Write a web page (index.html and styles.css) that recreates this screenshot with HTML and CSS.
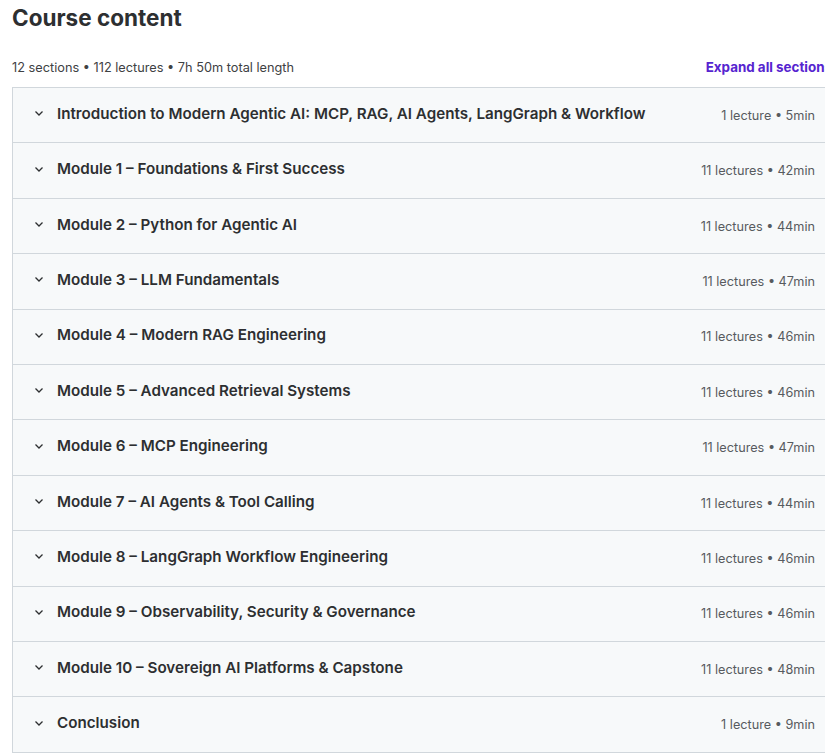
FILE: index.html
```html
<!DOCTYPE html>
<html lang="en">
<head>
    <meta charset="UTF-8">
    <title>Course content</title>
    <link rel="stylesheet" href="styles.css">
</head>
<body>
    <div class="container">
        <h2 class="heading">Course content</h2>

        <div class="summary">
            <span>12 sections • 112 lectures • 7h 50m total length</span>
            <button class="expand">Expand all sections</button>
        </div>

        <!-- Sections list -->
        <div class="sections">
            <div class="section">
                <span class="chevron"><svg width="12" height="12" viewBox="0 0 12 12"><path d="M2.5 4.5 6 8l3.5-3.5" fill="none" stroke="currentColor" stroke-width="1.3"/></svg></span>
                <span class="title">Introduction to Modern Agentic AI: MCP, RAG, AI Agents, LangGraph &amp; Workflow</span>
                <span class="meta">1 lecture • 5min</span>
            </div>
            <div class="section">
                <span class="chevron"><svg width="12" height="12" viewBox="0 0 12 12"><path d="M2.5 4.5 6 8l3.5-3.5" fill="none" stroke="currentColor" stroke-width="1.3"/></svg></span>
                <span class="title">Module 1 – Foundations &amp; First Success</span>
                <span class="meta">11 lectures • 42min</span>
            </div>
            <div class="section">
                <span class="chevron"><svg width="12" height="12" viewBox="0 0 12 12"><path d="M2.5 4.5 6 8l3.5-3.5" fill="none" stroke="currentColor" stroke-width="1.3"/></svg></span>
                <span class="title">Module 2 – Python for Agentic AI</span>
                <span class="meta">11 lectures • 44min</span>
            </div>
            <div class="section">
                <span class="chevron"><svg width="12" height="12" viewBox="0 0 12 12"><path d="M2.5 4.5 6 8l3.5-3.5" fill="none" stroke="currentColor" stroke-width="1.3"/></svg></span>
                <span class="title">Module 3 – LLM Fundamentals</span>
                <span class="meta">11 lectures • 47min</span>
            </div>
            <div class="section">
                <span class="chevron"><svg width="12" height="12" viewBox="0 0 12 12"><path d="M2.5 4.5 6 8l3.5-3.5" fill="none" stroke="currentColor" stroke-width="1.3"/></svg></span>
                <span class="title">Module 4 – Modern RAG Engineering</span>
                <span class="meta">11 lectures • 46min</span>
            </div>
            <div class="section">
                <span class="chevron"><svg width="12" height="12" viewBox="0 0 12 12"><path d="M2.5 4.5 6 8l3.5-3.5" fill="none" stroke="currentColor" stroke-width="1.3"/></svg></span>
                <span class="title">Module 5 – Advanced Retrieval Systems</span>
                <span class="meta">11 lectures • 46min</span>
            </div>
            <div class="section">
                <span class="chevron"><svg width="12" height="12" viewBox="0 0 12 12"><path d="M2.5 4.5 6 8l3.5-3.5" fill="none" stroke="currentColor" stroke-width="1.3"/></svg></span>
                <span class="title">Module 6 – MCP Engineering</span>
                <span class="meta">11 lectures • 47min</span>
            </div>
            <div class="section">
                <span class="chevron"><svg width="12" height="12" viewBox="0 0 12 12"><path d="M2.5 4.5 6 8l3.5-3.5" fill="none" stroke="currentColor" stroke-width="1.3"/></svg></span>
                <span class="title">Module 7 – AI Agents &amp; Tool Calling</span>
                <span class="meta">11 lectures • 44min</span>
            </div>
            <div class="section">
                <span class="chevron"><svg width="12" height="12" viewBox="0 0 12 12"><path d="M2.5 4.5 6 8l3.5-3.5" fill="none" stroke="currentColor" stroke-width="1.3"/></svg></span>
                <span class="title">Module 8 – LangGraph Workflow Engineering</span>
                <span class="meta">11 lectures • 46min</span>
            </div>
            <div class="section">
                <span class="chevron"><svg width="12" height="12" viewBox="0 0 12 12"><path d="M2.5 4.5 6 8l3.5-3.5" fill="none" stroke="currentColor" stroke-width="1.3"/></svg></span>
                <span class="title">Module 9 – Observability, Security &amp; Governance</span>
                <span class="meta">11 lectures • 46min</span>
            </div>
            <div class="section">
                <span class="chevron"><svg width="12" height="12" viewBox="0 0 12 12"><path d="M2.5 4.5 6 8l3.5-3.5" fill="none" stroke="currentColor" stroke-width="1.3"/></svg></span>
                <span class="title">Module 10 – Sovereign AI Platforms &amp; Capstone</span>
                <span class="meta">11 lectures • 48min</span>
            </div>
            <div class="section">
                <span class="chevron"><svg width="12" height="12" viewBox="0 0 12 12"><path d="M2.5 4.5 6 8l3.5-3.5" fill="none" stroke="currentColor" stroke-width="1.3"/></svg></span>
                <span class="title">Conclusion</span>
                <span class="meta">1 lecture • 9min</span>
            </div>
        </div>
    </div>
</body>
</html>
```

FILE: styles.css
```css
html {
    overflow: hidden;
}

body {
    font-family: Inter, "Noto Sans", sans-serif;
    color: #2d2f31;
    background-color: #ffffff;
    margin: 0;
    padding: 0;
}

.container {
    width: 820px;
    padding-left: 12px;
}

.heading {
    font-size: 22.5px;
    font-weight: 700;
    margin: 4px 0 0;
    line-height: 28px;
}

.summary {
    display: flex;
    justify-content: space-between;
    align-items: center;
    font-size: 12.75px;
    color: #3e4143;
    margin-top: 27px;
    margin-bottom: 12px;
}

.expand {
    background: none;
    border: none;
    padding: 0;
    font-family: inherit;
    font-size: 13.4px;
    font-weight: 700;
    color: #5624d0;
    cursor: pointer;
}

.sections {
    border: 1px solid #d1d7dc;
    border-bottom: none;
}

.section {
    display: flex;
    align-items: center;
    height: 55.42px;
    padding: 0 16px 0 20px;
    background-color: #f7f9fa;
    border-bottom: 1px solid #d1d7dc;
    box-sizing: border-box;
}

.chevron {
    display: flex;
    width: 12px;
    margin-right: 12px;
    margin-top: -4px;
    color: #2d2f31;
}

.title {
    flex: 1;
    font-size: 15.2px;
    font-weight: 600;
    margin-top: -4px;
}

.meta {
    font-size: 12.7px;
    color: #575b5f;
}
```
